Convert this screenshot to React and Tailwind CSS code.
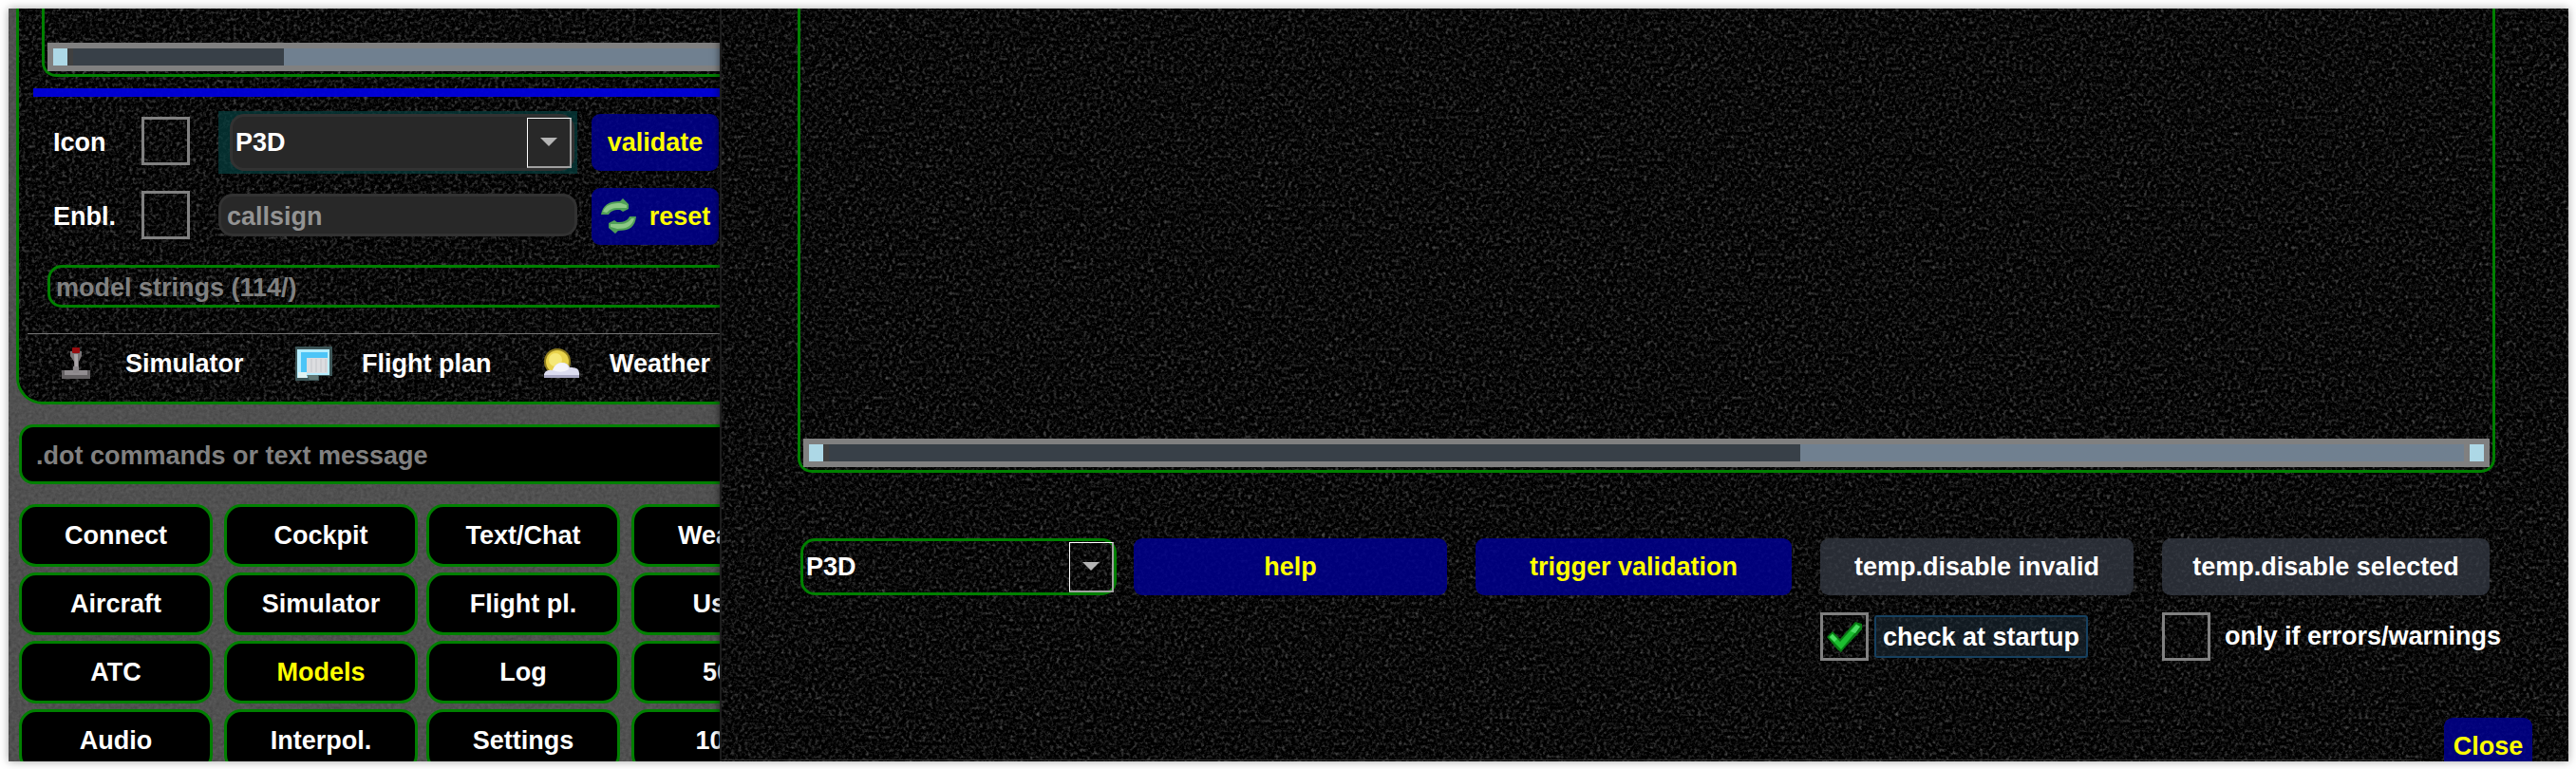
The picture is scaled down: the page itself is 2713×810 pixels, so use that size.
const DARK_ID = "grain-dark";
const GRAY_ID = "grain-gray";

function Grain({ id, seed, slope, intercept }) {
  return (
    <svg className="pointer-events-none absolute inset-0 h-full w-full" aria-hidden="true">
      <filter id={id} x="0" y="0" width="100%" height="100%" colorInterpolationFilters="sRGB">
        <feTurbulence type="fractalNoise" baseFrequency="0.283 0.291" numOctaves="3" seed={seed} />
        <feColorMatrix
          values={`${slope} ${slope} 0 0 ${intercept}  ${slope} ${slope} 0 0 ${intercept}  ${slope} ${slope} 0 0 ${intercept}  0 0 0 0 1`}
        />
      </filter>
      <rect width="100%" height="100%" filter={`url(#${id})`} />
    </svg>
  );
}

function Scrollbar({ className, thumb, end }) {
  return (
    <div className={`flex h-[30px] items-center bg-[#808080] pl-1.5 ${className}`}>
      <div className="h-[18px] w-[15px] shrink-0 bg-[#add8e6]" />
      <div className="h-[18px] w-1.5 shrink-0 bg-[#404040]" />
      <div className={`h-[18px] shrink-0 bg-[#384048] ${thumb}`} />
      <div className="h-[18px] grow bg-[#708090]" />
      {end && <div className="mr-1.5 ml-1.5 h-[18px] w-[15px] shrink-0 bg-[#add8e6]" />}
    </div>
  );
}

function CheckBox({ checked }) {
  return (
    <div className="flex size-[51px] shrink-0 items-center justify-center border-3 border-[#808080]">
      {checked && (
        <svg viewBox="0 0 39 33" className="h-[33px] w-[39px]">
          <path d="M1 17 L7 11 L15 19 L31 1 L38 3 L38 9 L20 28 L16 33 L12 30 Z" fill="#087a14" />
          <path d="M3 17 L7 13.5 L15 22 L32 3 L36 6 L16 30 Z" fill="#1cbe30" />
          <path d="M4 17 L7 14 L12 19 L9 22 Z M26 11 L32 4 L36 6 L31 13 Z" fill="#4bdc62" />
        </svg>
      )}
    </div>
  );
}

function DropButton() {
  return (
    <div className="flex h-[53px] w-[47px] items-center justify-center border border-r-2 border-b-2 border-white border-r-[#a0a0a0] border-b-[#a0a0a0]">
      <svg viewBox="0 0 18 9" className="h-[9px] w-[18px]">
        <path d="M0 0H18L9 9Z" fill="#b4b4b4" />
      </svg>
    </div>
  );
}

function BlueButton({ className, children }) {
  return (
    <div
      className={`flex shrink-0 items-center justify-center rounded-[9px] bg-[#00008f]/85 text-[#ffff00] ${className}`}
    >
      {children}
    </div>
  );
}

function GrayButton({ className, children }) {
  return (
    <div
      className={`flex h-[60px] shrink-0 items-center justify-center rounded-[9px] bg-[#353b45]/75 ${className}`}
    >
      {children}
    </div>
  );
}

function RefreshIcon() {
  return (
    <svg viewBox="0 0 39 38" className="h-[38px] w-[39px] shrink-0">
      <path
        d="M1 17 C3 7 9 3 21 3 L24 0 L30 6 V11 L24 14 L21 12 C13 12 11 14 9 17 Z"
        fill="#4f9f57"
      />
      <path d="M3 14 C6 7 11 5 22 5 L28 7 V10 H20 C12 10 10 12 7 15 Z" fill="#8cc986" />
      <path
        d="M38 19 C37 30 31 34 19 34 L16 37 L9 31 V26 L15 23 L18 25 C26 25 29 23 31 19 Z"
        fill="#4f9f57"
      />
      <path d="M36 21 C34 29 28 32 18 32 L11 30 V27 H20 C27 27 30 25 33 21 Z" fill="#8cc986" />
    </svg>
  );
}

function JoystickIcon() {
  return (
    <svg viewBox="0 0 30 34" className="h-[34px] w-[30px] shrink-0">
      <path d="M9 4 H21 V9 L18 15 V26 H13 V15 L9 9 Z" fill="#777375" />
      <path d="M13 7 H17 V25 H14 Z" fill="#aaa5a8" />
      <rect x="11" y="0" width="8" height="6" rx="1" fill="#970d10" />
      <rect x="0" y="24" width="30" height="9" fill="#625f61" />
      <rect x="3" y="24" width="24" height="5" fill="#918d90" />
      <rect x="12" y="20" width="6" height="7" fill="#8b878a" />
    </svg>
  );
}

function PlanIcon() {
  return (
    <svg viewBox="0 0 39 36" className="h-9 w-[39px] shrink-0">
      <path d="M0 0H39V31H25V36H0Z" fill="#3c5557" />
      <path d="M2 3H36V30H13V33H2Z" fill="#b5edff" />
      <path d="M6 6H34V12H13V27H6Z" fill="#4cc5f7" />
      <path d="M12 12H34V28H12Z" fill="#dcdde0" />
      <path d="M17 13V27M22 13V27M27 13V27M32 13V27" stroke="#c3c6ca" strokeWidth="1" />
      <path d="M3 27H12V33H3Z" fill="#e0f3f3" />
      <path d="M12 30H24V35H15Z" fill="#5e7674" />
    </svg>
  );
}

function WeatherIcon() {
  return (
    <svg viewBox="0 0 39 32" className="h-8 w-[39px] shrink-0">
      <circle cx="15" cy="14" r="14" fill="#8f7c1e" />
      <circle cx="15" cy="14" r="12" fill="#e8d24a" />
      <circle cx="13" cy="12" r="7" fill="#f5e877" />
      <path
        d="M1 31 V27 Q3 22 10 23 Q13 15 20 15 Q26 15 28 20 Q38 19 38 26 V31 Z"
        fill="#dcdcf0"
      />
      <path d="M10 23 Q13 15 20 15 Q26 15 27 22 Q20 27 10 23 Z" fill="#f4f4fb" />
      <path d="M1 28H38V31H1Z" fill="#a9a8c4" />
    </svg>
  );
}

const NAV = [
  ["Connect", "Cockpit", "Text/Chat", "Weather"],
  ["Aircraft", "Simulator", "Flight pl.", "Users"],
  ["ATC", "Models", "Log", "50%"],
  ["Audio", "Interpol.", "Settings", "100%"],
];

function MainWindow() {
  return (
    <div className="relative h-full w-[749px] shrink-0 overflow-hidden bg-[#505050]">
      <Grain id={GRAY_ID} seed={4} slope={0.08} intercept={0.235} />
      <div className="relative w-[1000px]">
        <div className="relative ml-2 h-[417px] overflow-hidden rounded-bl-[28px] border-b-3 border-l-3 border-[#008000] bg-black">
          <Grain id={DARK_ID} seed={9} slope={0.42} intercept={-0.385} />
          <div className="relative">
            <div className="ml-6 h-[72px] rounded-bl-[15px] border-b-3 border-l-3 border-[#008000] pt-9 pl-[3px]">
              <Scrollbar className="w-full" thumb="w-[222px]" />
            </div>
            <div className="mt-3 ml-[15px] h-[9px] bg-[#0000dc]/95" />
            <div className="mt-[15px] flex h-[66px] items-center">
              <div className="ml-9 w-[93px]">Icon</div>
              <div className="-mt-[3px]">
                <CheckBox />
              </div>
              <div className="ml-[30px] flex h-[66px] w-[378px] items-center bg-[#063c3c]/75 pr-[3px] pl-3">
                <div className="flex h-[60px] grow items-center justify-between rounded-[15px] border-3 border-[#323232] bg-[#282828] pl-[3px]">
                  <span>P3D</span>
                  <DropButton />
                </div>
              </div>
              <BlueButton className="ml-[15px] h-[60px] w-[134px]">validate</BlueButton>
            </div>
            <div className="mt-[15px] flex h-[60px] items-center">
              <div className="ml-9 w-[93px]">Enbl.</div>
              <div className="-mt-[3px]">
                <CheckBox />
              </div>
              <div className="-mt-[3px] ml-[30px] flex h-[45px] w-[378px] items-center rounded-[15px] border-3 border-[#323232] bg-[#282828] pt-[3px] pl-1.5 text-[#939393]">
                callsign
              </div>
              <BlueButton className="ml-[15px] h-[60px] w-[134px] gap-[13px]">
                <RefreshIcon />
                reset
              </BlueButton>
            </div>
            <div className="mt-[21px] ml-[30px] flex h-[45px] items-center rounded-l-[15px] border-3 border-[#008000] pt-[3px] pl-1.5 text-[#808080]">
              model strings (114/)
            </div>
            <div className="mt-[27px] ml-[9px] h-px bg-[#787878]" />
            <div className="flex h-[62px] items-center">
              <div className="ml-[45px] flex w-[246px] items-center gap-[37px]">
                <JoystickIcon />
                Simulator
              </div>
              <div className="flex w-[261px] items-center gap-[31px]">
                <PlanIcon />
                Flight plan
              </div>
              <div className="flex items-center gap-[31px]">
                <WeatherIcon />
                Weather
              </div>
            </div>
          </div>
        </div>
        <div className="mt-[21px] ml-[11px] flex h-[63px] items-center rounded-l-[15px] border-3 border-[#008000] bg-black pt-[3px] pl-[15px] text-[#808080]">
          .dot commands or text message
        </div>
        <div className="mt-[21px] ml-[11px] grid grid-cols-[204px_204px_204px_204px] gap-x-3 gap-y-1.5">
          {NAV.flat().map((label, i) => (
            <div
              key={label + i}
              className={`flex h-[66px] items-center justify-center rounded-[18px] border-3 border-[#008000] bg-black ${
                i % 4 > 1 ? "relative -left-[3px]" : ""
              } ${label === "Models" ? "text-[#ffff00]" : ""}`}
            >
              {label}
            </div>
          ))}
        </div>
      </div>
    </div>
  );
}

function ValidationDialog() {
  return (
    <div className="relative h-full grow overflow-hidden border-l-2 border-[#1e1e1e] bg-black shadow-[0_0_8px_rgba(0,0,0,0.6)]">
      <Grain id="grain-dialog" seed={21} slope={0.42} intercept={-0.385} />
      <div className="relative">
        <div className="ml-[80px] h-[489px] w-[1788px] rounded-b-[15px] border-3 border-t-0 border-[#008000] pt-[453px] pl-[3px]">
          <Scrollbar className="w-[1776px]" thumb="w-[1023px]" end />
        </div>
        <div className="mt-[69px] ml-[83px] flex">
          <div className="flex h-[60px] w-[333px] shrink-0 items-center justify-between rounded-[15px] border-3 border-[#008000] pl-[3px]">
            <span>P3D</span>
            <DropButton />
          </div>
          <BlueButton className="ml-[18px] h-[60px] w-[330px]">help</BlueButton>
          <BlueButton className="ml-[30px] h-[60px] w-[333px]">trigger validation</BlueButton>
          <GrayButton className="ml-[30px] w-[330px]">temp.disable invalid</GrayButton>
          <GrayButton className="ml-[30px] w-[345px]">temp.disable selected</GrayButton>
        </div>
        <div className="mt-[18px] ml-[1157px] flex h-[51px] items-center">
          <div className="flex w-[360px] items-center gap-1.5">
            <CheckBox checked />
            <div className="flex h-[45px] w-[225px] items-center justify-center rounded-[3px] border-2 border-[#16405f] bg-[#1b2a36]/60 pt-px whitespace-nowrap">
              check at startup
            </div>
          </div>
          <div className="flex items-center gap-[15px] whitespace-nowrap">
            <CheckBox />
            only if errors/warnings
          </div>
        </div>
        <div className="mt-[60px] flex gap-[31px]">
          <div className="h-[45px] w-[1783px] border-b border-[#343434]" />
          <BlueButton className="h-[60px] w-[93px]">Close</BlueButton>
        </div>
      </div>
    </div>
  );
}

export default function App() {
  return (
    <div className="h-[810px] w-[2713px] overflow-hidden bg-white pt-[9px] pr-2 pb-2 pl-[9px] font-['Liberation_Sans',Arial,sans-serif] text-[27px] leading-none font-bold text-white">
      <div className="flex h-full w-full overflow-hidden shadow-[0_0_9px_rgba(0,0,0,0.35)]">
        <MainWindow />
        <ValidationDialog />
      </div>
    </div>
  );
}
